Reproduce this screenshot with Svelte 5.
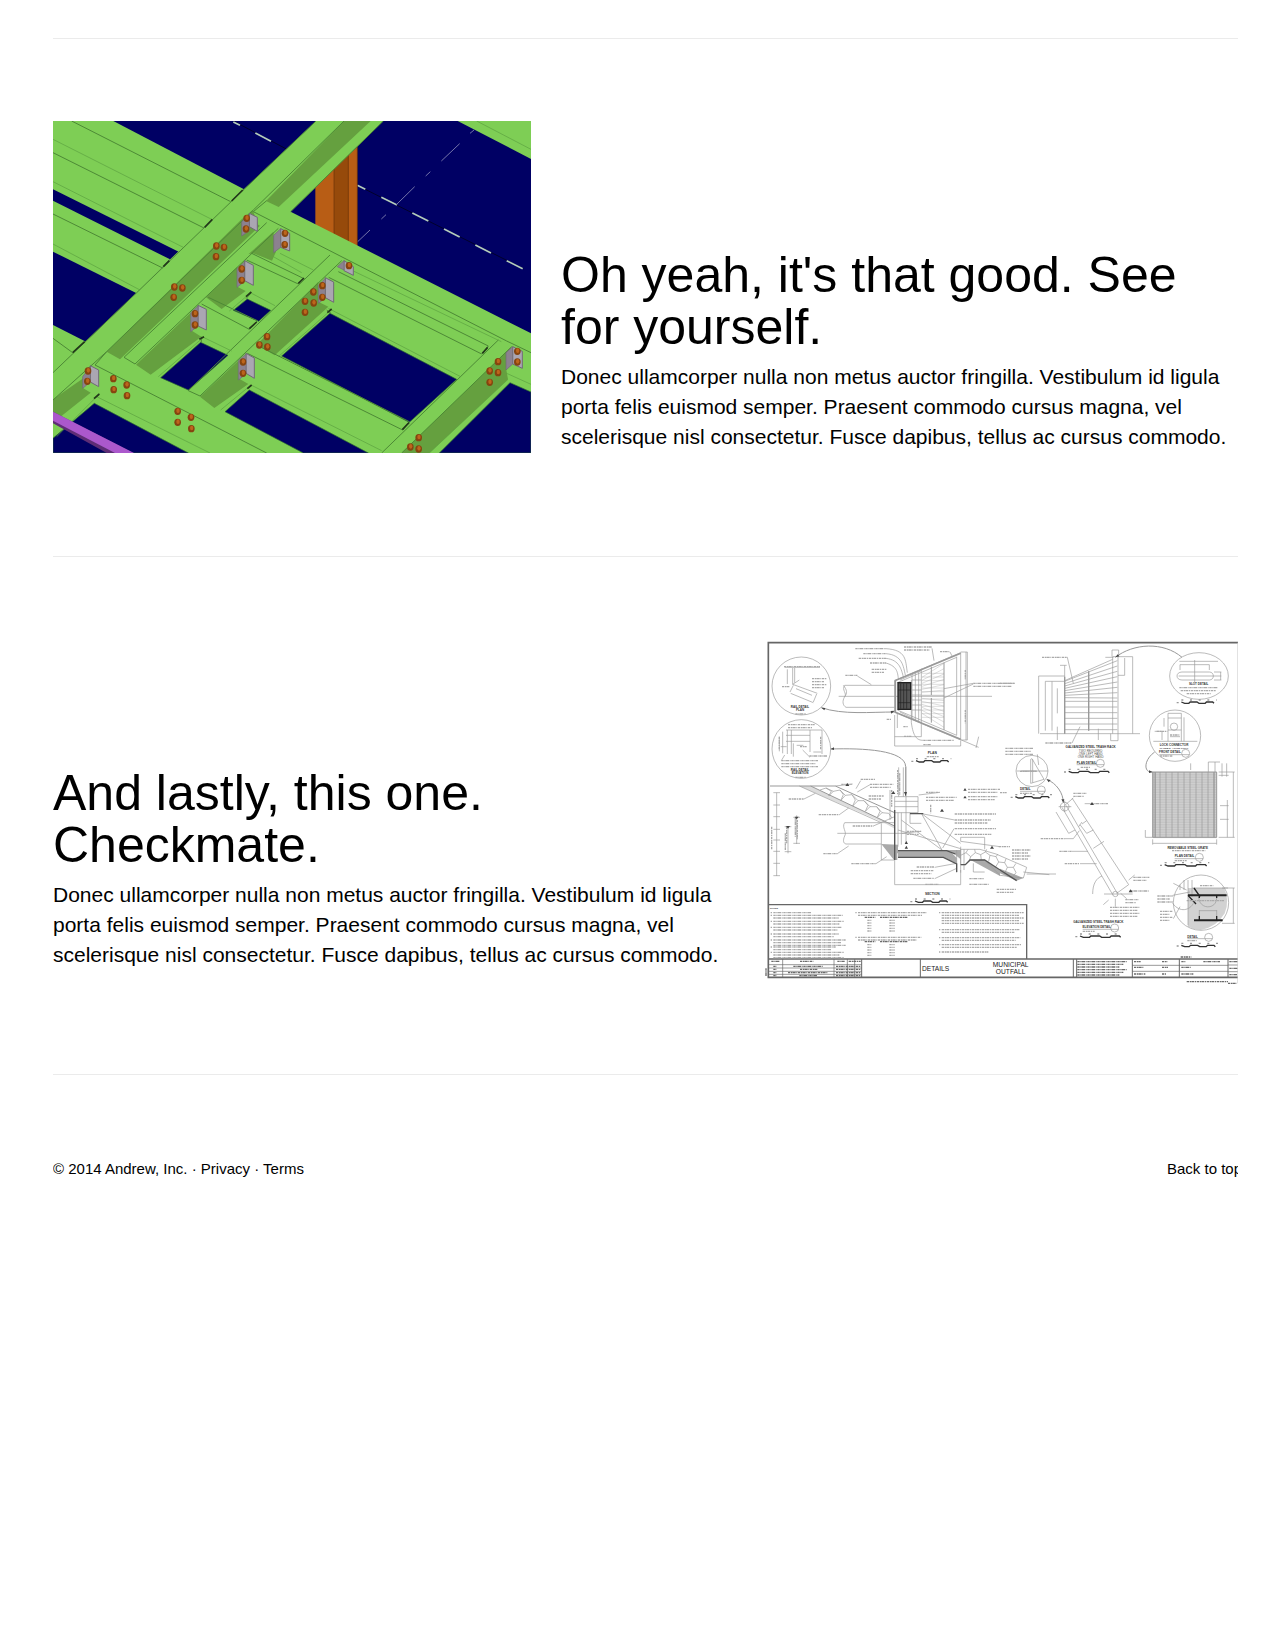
<script>
  const lead =
    'Donec ullamcorper nulla non metus auctor fringilla. Vestibulum id ligula porta felis euismod semper. Praesent commodo cursus magna, vel scelerisque nisl consectetur. Fusce dapibus, tellus ac cursus commodo.';

  const bolts = [
    [620, 325], [618, 357], [529, 408], [552, 412], [528, 440], [403, 531], [427, 534], [401, 562],
    [735, 370], [734, 404], [605, 477], [605, 511], [927, 467], [847, 527], [847, 562], [820, 546],
    [795, 574], [821, 579], [795, 607], [465, 611], [465, 645], [681, 680], [658, 705], [682, 711],
    [609, 756], [609, 790], [144, 783], [142, 814], [220, 806], [221, 839], [260, 825], [261, 857],
    [413, 904], [413, 937], [453, 922], [454, 956], [1432, 724], [1432, 756], [1374, 755],
    [1349, 783], [1374, 788], [1349, 817], [1136, 983], [1111, 1011], [1136, 1017]
  ];

  // Small annotation blocks: x, y, width, number of rows
  const notes = [
    [286, 56, 92, 1], [310, 71, 68, 1], [296, 85, 82, 1], [330, 99, 48, 1], [335, 118, 45, 2],
    [256, 136, 36, 1], [432, 51, 84, 2], [540, 65, 28, 1], [640, 160, 124, 2], [156, 146, 44, 4],
    [72, 110, 108, 1], [66, 170, 22, 1], [106, 252, 32, 1], [84, 284, 80, 2], [64, 392, 110, 3],
    [106, 442, 32, 1], [120, 350, 20, 1], [148, 378, 54, 1], [490, 331, 92, 1], [380, 268, 14, 1],
    [430, 290, 14, 1], [432, 319, 22, 1], [490, 344, 22, 1], [500, 380, 36, 1], [302, 448, 44, 1],
    [330, 463, 70, 2], [244, 463, 32, 1], [86, 507, 46, 1], [326, 498, 46, 2], [498, 487, 40, 1],
    [498, 502, 92, 2], [624, 478, 96, 2], [624, 500, 88, 2], [176, 554, 62, 1], [278, 588, 62, 1],
    [584, 552, 124, 1], [584, 570, 108, 2], [584, 596, 124, 1], [584, 613, 110, 1], [440, 604, 44, 2],
    [190, 671, 42, 1], [274, 701, 74, 1], [470, 711, 52, 1], [452, 722, 70, 2], [460, 745, 62, 1],
    [628, 746, 44, 1], [628, 763, 60, 1], [496, 763, 40, 1], [716, 650, 34, 1], [710, 778, 58, 2],
    [756, 660, 56, 4], [846, 82, 76, 1], [856, 339, 78, 1], [736, 355, 84, 3], [720, 160, 44, 1],
    [720, 488, 20, 1], [962, 412, 30, 1], [940, 490, 40, 2], [994, 521, 50, 1],
    [842, 626, 72, 1], [898, 664, 36, 1], [914, 701, 44, 1], [1120, 742, 48, 2], [1108, 783, 60, 1],
    [1096, 809, 40, 2], [1050, 832, 90, 4], [1258, 173, 116, 1], [1262, 182, 106, 1], [1280, 191, 72, 1],
    [1190, 304, 32, 1], [1230, 315, 30, 1], [1236, 662, 100, 1], [1244, 692, 36, 1], [1280, 812, 112, 1],
    [1192, 798, 46, 3], [1200, 844, 38, 4], [1320, 767, 40, 1], [1200, 378, 38, 1], [780, 490, 36, 1],
    [968, 904, 36, 1], [1282, 932, 30, 1], [780, 424, 50, 1]
  ];

  const legend = [
    [40, 848, 114, 1], [40, 856, 210, 2], [40, 874, 212, 2], [40, 892, 206, 2], [40, 912, 196, 2],
    [40, 930, 218, 3], [40, 951, 188, 2], [40, 967, 212, 3], [294, 848, 206, 2], [294, 922, 190, 2],
    [545, 848, 246, 5], [545, 899, 234, 2], [545, 923, 236, 2], [545, 944, 240, 2], [545, 966, 140, 1]
  ];

  const scales = [
    [468, 392, 106], [465, 813, 106], [926, 424, 130], [766, 500, 110], [1264, 216, 106],
    [1214, 704, 134], [960, 918, 130], [1264, 946, 110]
  ];

  const titles = [
    [120, 233, 'RAIL DETAIL', 9], [120, 243, 'PLAN', 9], [120, 422, 'RAIL DETAIL', 9],
    [120, 433, 'ELEVATION', 9], [517, 371, 'PLAN', 10], [517, 794, 'SECTION', 10],
    [992, 355, 'GALVANIZED STEEL TRASH RACK', 9], [980, 402, 'PLAN DETAIL', 9],
    [796, 481, 'DETAIL', 9], [1316, 165, 'SLOT DETAIL', 9], [1242, 349, 'LOCK CONNECTOR', 9],
    [1242, 357, 'PL REQ’D. 4 THUS TOTAL', 7], [1230, 369, 'FRONT DETAIL', 9],
    [1283, 656, 'REMOVABLE STEEL GRATE', 9], [1274, 682, 'PLAN DETAIL', 9],
    [1015, 880, 'GALVANIZED STEEL TRASH RACK', 9], [1010, 895, 'ELEVATION DETAIL', 9],
    [1298, 924, 'DETAIL', 9]
  ];

  const range = (n) => Array.from({ length: n }, (_, i) => i);
</script>

<main id="top">
  <hr />
  <section class="feature">
    <svg class="picture" viewBox="39 33 1434 996" role="img" aria-label="Steel framing model">
      <rect x="39" y="33" width="1434" height="996" fill="#000064" />
      <g fill="none" stroke="#00002c" stroke-width="3">
        <path d="M580 33L760 128M952 226L1450 476" />
      </g>
      <g fill="none" stroke="#b4ccbc" stroke-width="5">
        <path d="M580 36L600 46M646 69L693 94M952 226L976 238M1024 262L1071 285M1117 309L1165 333M1212 357L1259 381M1306 405L1353 429M1400 452L1448 476" />
      </g>
      <g fill="none" stroke="#7474aa" stroke-width="3">
        <path d="M1302 60L1290 70M1259 101L1204 153M1171 185L1157 198M1124 230L1069 284M1038 314L1024 327M990 360L952 396M320 1003L294 1029" />
      </g>
      <g fill="#b85d15">
        <path d="M826 220L952 110V415L826 352z" />
        <path fill="#964a0b" d="M882 172L925 130V403L882 382z" />
        <path fill="none" stroke="#673207" stroke-width="2" d="M882 170V380M925 130V400M952 110V410" />
      </g>
      <g fill="#7ece55">
        <path d="M39 33H220L612 238L425 430L39 238z" />
        <path d="M39 272L390 448L290 550L39 425z" />
        <path d="M39 645L135 694L80 790H39z" />
        <path d="M1253 33H1473V147z" />
        <path d="M39 788L290 548L350 486L612 238L828 33H1030L752 305L1473 670V1029H39z" />
      </g>
      <g fill="#000064" stroke="#2e6a31" stroke-width="2">
        <path d="M622 567L692 601L656 634L580 601z" />
        <path d="M482 697L564 736L445 840L362 803z" />
        <path d="M870 610L1250 808L1108 937L725 738z" />
        <path d="M628 840L985 1029H790L555 905z" />
        <path d="M1410 818L1473 846V1029H1198z" />
        <path d="M163 880L445 1029H39V985z" />
      </g>
      <g fill="#65a03f">
        <path d="M912 33H992L716 291L678 273z" />
        <path d="M605 328L638 300L655 345L660 347L240 748L200 725z" />
        <path d="M39 868L130 805V835L152 848L56 925L39 905z" />
        <path d="M700 365L708 425L696 452L640 430L625 433z" />
        <path d="M592 470V530L617 543L545 597L498 562z" />
        <path d="M452 608V660L484 680L332 794L288 764z" />
        <path d="M835 515V575L865 590L704 736L650 705z" />
        <path d="M595 752V805L625 822L523 894L480 860z" />
        <path d="M1414 712L1399 780L1404 808L1168 1029H1085z" />
      </g>
      <g fill="none" stroke="#4d8936" stroke-width="3">
        <path d="M95 33L572 275M39 128L492 354M39 312L368 474M39 685L98 728" />
        <path d="M612 238L575 272M39 788L290 548L612 238L828 33M912 33L640 300L200 725L39 870" />
        <path d="M1030 33L752 305M680 272L640 305M640 305L1400 693L1473 728M200 725L165 765L680 1029" />
        <path d="M715 355L285 762L252 742L680 338M905 452L480 858L445 842L870 435M1415 710L1085 1029M1025 1029L1375 690" />
        <path d="M635 430L790 505L775 522L620 450M505 562L652 632L628 658L485 582M895 485L1345 708L1325 732L866 502M650 705L1108 935L1088 960L622 730" />
        <path d="M634 548L618 566M484 680V697M860 600L873 610" />
      </g>
      <g fill="none" stroke="#5aa040" stroke-width="2">
        <path d="M39 88L515 328M39 215L430 412M39 402L300 540M1310 33L1473 118M940 483L1384 695M720 430L820 480" />
        <path d="M865 595L1262 800M635 826L1025 1022M170 860L510 1029M635 550L705 587M490 682L575 723M1400 790L1473 823M700 440L785 488" />
        <path d="M180 850L50 980M632 548L568 603M490 682L355 800M875 598L715 740M633 825L542 900M1404 808L1168 1029" />
      </g>
      <g fill="none" stroke="#22381a" stroke-width="5">
        <path d="M575 273L608 240M494 352L517 328M370 470L388 452M98 728L134 695M775 520L792 504M628 656L650 636M1327 730L1343 712M1087 959L1107 938" />
        <path d="M618 560L634 546M478 688L492 680M862 608L875 597M622 836L635 825M162 866L178 852" />
      </g>
      <path fill="#5e2d75" d="M39 905L280 1029H200L39 940z" />
      <path fill="#ab58cc" d="M39 905L282 1029H225L39 932z" />
      <g fill="#aaa6b2" stroke="#706a76" stroke-width="3">
        <path d="M628 310L652 322V364L628 350z" />
        <path d="M722 356L749 370V423L722 412z" />
        <path d="M614 452L640 466V526L614 512z" />
        <path d="M912 452L940 470V496L912 482z" />
        <path d="M856 503L881 516V577L856 563z" />
        <path d="M474 586L499 598V660L474 648z" />
        <path d="M618 730L643 744V805L618 790z" />
        <path d="M151 767L176 780V830L151 816z" />
        <path d="M1418 710L1447 724V775L1418 762z" />
      </g>
      <g fill="#8c8190" stroke="#706a76" stroke-width="2">
        <path d="M605 335L628 315V362L605 378z" />
        <path d="M722 356V412L701 428V376z" />
        <path d="M591 476L614 455V514L591 532z" />
        <path d="M835 526L856 505V564L835 580z" />
        <path d="M452 608L474 588V648L452 665z" />
        <path d="M595 752L618 732V792L595 810z" />
        <path d="M128 800L151 770V816L128 835z" />
        <path d="M912 452V480L892 470z" />
        <path d="M1418 710V762L1398 780V728z" />
      </g>
      {#each bolts as [x, y]}
        <ellipse cx={x} cy={y} rx="10" ry="11" fill="#86440f" />
        <ellipse cx={x + 1} cy={y - 2} rx="5" ry="7" fill="#bd651c" />
      {/each}
    </svg>
    <div class="copy">
      <h2>Oh yeah, it's that good. See for yourself.</h2>
      <p>{lead}</p>
    </div>
  </section>

  <hr />
  <section class="feature flipped">
    <div class="copy">
      <h2>And lastly, this one. Checkmate.</h2>
      <p>{lead}</p>
    </div>
    <svg class="picture" viewBox="0 27 1434 1059" role="img" aria-label="Municipal outfall details">
      <!-- sheet frame and title block -->
      <g fill="none" stroke="#666" stroke-width="5">
        <path d="M1434 38H25V1042H1434" />
        <path d="M25 824H800V987M25 987H1434" stroke-width="4" />
        <path d="M305 987V1042M481 987V1042M940 987V1042M950 987V1042M1117 987V1042M1258 987V1042M1404 987V1042" stroke-width="3" />
        <path d="M25 1004H305M25 1014H305M25 1024H305M25 1033H305M68 987V1042M222 987V1042M262 987V1042M284 987V1042" stroke-width="2" />
        <path d="M1117 1006H1404M1117 1024H1404M1404 1005H1434M1404 1025H1434" stroke-width="2" />
      </g>
      <path d="M1433 38V1060" stroke="#ccc" stroke-width="2" />
      <g fill="#222" font-size="20">
        <text x="486" y="1023">DETAILS</text>
        <text x="752" y="1012" text-anchor="middle">MUNICIPAL</text>
        <text x="752" y="1033" text-anchor="middle">OUTFALL</text>
      </g>
      <g class="small dark">
        {#each range(6) as i}
          <path d="M952 {995 + i * 8}h{150 - (i % 3) * 12}" />
        {/each}
        <path d="M34 994H60M120 994H160M232 994H254M266 994H302M100 1009H190M120 1018H172M84 1028H204M118 1037H172M228 1009H302M228 1018H302M228 1028H302M228 1037H302M40 1009h10M40 1018h10M40 1028h10M40 1037h10" />
        <path d="M1122 995h20M1206 995h16M1122 1012h28M1206 1012h18M1122 1032h34M1206 1032h12M1264 995h12M1330 995h50M1264 1012h28M1264 1032h36M1408 995h26M1408 1015h26M1408 1034h24M1262 981h32M1280 1055h124M1404 1060h26" />
        <path d="M18 1015V1040" />
      </g>

      <!-- rail details -->
      <g class="line">
        <ellipse cx="124" cy="168" rx="88" ry="87" />
        <ellipse cx="124" cy="357" rx="88" ry="88" />
        <path d="M98 114V163L118 150M104 114V158M98 163L172 190M92 190L160 218M90 186L100 166M160 216L170 192M82 118V162M108 176L156 196M74 112H180" />
        <path d="M78 300H152M78 316H150M78 334H150M82 300V372M94 300V372M150 300V366M152 300H186V372M68 305V370M58 320V364M80 350H62M100 340V380M110 346H130M184 366H160M128 360L150 382M74 375L64 392" />
        <path d="M184 233C250 255 330 246 404 246M212 357C310 354 436 360 437 410V498" stroke-width="3" />
      </g>

      <!-- outfall plan -->
      <g class="line">
        <path d="M404 166H254C244 180 262 190 254 200C246 214 248 226 258 232H404M250 166C262 180 262 190 254 200M236 199H696" />
        <path d="M378 56C440 60 436 90 442 128M378 71C428 75 430 110 436 135M378 85C420 90 424 120 430 140M378 99C415 110 412 130 416 150M516 55L522 92M570 66L576 78M292 138L334 164M640 160L552 176M640 162L552 204M454 150V278C460 320 470 331 490 331" />
        <path d="M404 152L602 68V330L404 246zM412 158L590 82M412 240L590 316M484 116V280M456 130V270M420 150L484 122M420 246L484 278M466 130V270M476 125V275M456 150H484M456 165H484M456 180H484M456 195H484M456 210H484M456 225H484M456 240H484M590 80V316M602 66H622V330H602M618 66V330M404 255V348H602V332M404 320H484V282M412 250V294M604 330L656 352M648 354L656 320" />
        {#each range(13) as i}
          <path d="M486 {142 + i * 9}L552 {100 + i * 16}" stroke-width="1" />
          <path d="M486 {130 + i * 11}H552" stroke-width="1" />
        {/each}
        <path d="M552 98V300M514 110V195M514 204V278" stroke-width="3" />
        <path d="M404 152L602 70M404 246L602 328M406 150V248" stroke-width="5" />
      </g>
      <rect x="414" y="158" width="38" height="80" fill="#555" stroke="#222" stroke-width="4" />
      <path d="M422 160V236M431 160V236M440 160V236M414 180H452M414 218H452" stroke="#222" stroke-width="2" />

      <!-- section -->
      <path d="M118 468L152 468L404 588V596L372 578z" fill="#ddd" />
      <path d="M364 642L402 690H412V670H580L602 688V660H414V644z" fill="#aaa" />
      <path d="M414 662H570L590 684V700L550 682H414zM632 690L674 690L720 722V738zM720 716L790 744L770 752L720 730z" fill="#aaa" />
      <g class="line">
        <path d="M30 468H226L404 548M152 468L404 588" stroke-width="3" />
        <path d="M118 468L364 578" />
        <path d="M180 480l18-6 16 10-8 14M206 498l14-14 20-4 10 14-8 18M242 512l14-16 20-2 10 16-8 18M278 528l16-16 18 0 12 14-8 18M316 544l14-14 20 0 10 14-8 18M352 562l14-14 20 2 10 14M198 474l22 10M240 480l16 16M276 494l18 18M312 512l18 18M350 530l16 18" />
        <path d="M50 488V738M40 488H60M40 525H60M40 560H60M40 598H60M40 630H60M40 664H60M40 700H60M40 737H60M84 588V670M110 556V642M74 590H94M74 665H94M100 562H120M100 640H120" />
        <path d="M404 578H254C244 592 262 606 254 618C248 632 250 640 258 642H364M232 610H440M404 500H474V548H404zM404 514H474M404 530H474M404 548V690M414 548V650M424 548V644M438 410V640M416 412V500M430 412V500M484 550L546 660M484 550L602 640M424 570L546 660M414 600L602 656M450 548V580H484M390 480V570M364 580V690H402M404 690V764H602V720" />
        <path d="M602 658H660L708 672L800 712L790 744L720 736L674 690H632L616 704H602zM602 634V622H674V658M602 634L720 650M590 660V728M602 650V728M612 720V658M640 700V726H674M800 732H888M790 726L868 734" />
        <path d="M602 676l16-8 14 12-4 12M618 668l6-10M632 680l14-12 16 6 2 16M646 668l-2-10M662 674l14-8 14 10-4 18M676 666l4-8M690 676l18 4 8 16-10 16M708 680l6-8M716 696l18 2 8 14-8 18M734 698l4-12M742 712l18 0 8 16-8 10M760 712l8-12" />
        <path d="M238 554L266 534M340 588L404 560M348 701L380 680M524 712L590 700M524 746L588 716M484 604L426 610M540 487L476 495M582 596L548 654M584 570L490 552M278 462L226 468M302 452L288 476M330 464L292 486M232 671L266 648M132 507L166 490" />
      </g>
      <path d="M404 540V690M414 662H560L586 672M414 682H550L590 702V726M602 704H616L630 690H674L720 720L770 752M450 551H490" fill="none" stroke="#555" stroke-width="4" />

      <!-- trash rack plan -->
      <g class="line">
        <path d="M914 106V311M986 124V302M1058 80V311M1074 80V311M914 152L1058 88M840 311H1140M836 138H914M836 138V311M876 154V302M892 175V250M856 154H914M856 154V302M1058 80H1118V311M1094 84V136H1074M900 106H920M1015 296V330M892 290V330M1036 82H1060M1056 60H1076V80M1056 60V80M922 82L940 160M936 339L960 290M1052 311V332H1074V311" />
        {#each range(8) as i}
          <path d="M914 {154 + i * 7}L1072 {92 + i * 16}" />
        {/each}
        {#each range(6) as i}
          <path d="M914 {214 + i * 17}H1072" />
        {/each}
        <path d="M986 124V302M914 140V311" stroke-width="4" />
        <path d="M1066 82C1120 40 1210 34 1266 82" stroke-width="3" />
        <ellipse cx="1317" cy="138" rx="88" ry="70" />
        <path d="M1258 94H1374M1260 104H1348M1260 104V120M1348 104V120M1266 126H1348C1364 126 1364 150 1348 150H1266C1246 150 1246 126 1266 126zM1304 90V156M1256 138H1384M1382 126V150M1362 126H1384M1362 150H1384" />
        <ellipse cx="1245" cy="317" rx="77" ry="77" />
        <path d="M1224 250H1264M1224 250V300H1264V250M1224 264H1264M1272 262V334M1212 264V290M1180 334H1312M1224 300V334M1264 300V334M1184 304H1206V330M1230 320H1260" />
        <circle cx="1242" cy="290" r="11" />
        <path d="M1184 366C1150 390 1150 430 1178 426" stroke-width="3" />
      </g>

      <!-- grate -->
      <rect x="1178" y="426" width="192" height="196" fill="#d6d6d6" />
      <g class="line">
        {#each range(40) as i}
          <path d="M1178 {428 + i * 5}H1370" stroke-width="1" />
        {/each}
        {#each range(11) as i}
          <path d="M{1182 + i * 18} 426V622" />
        {/each}
        <path d="M1178 426H1370V622H1178zM1186 426V622M1362 426V622" stroke-width="3" />
        <path d="M1178 640H1370M1178 628V644M1370 628V644M1376 426H1424M1376 622H1424M1420 426V622M1376 436H1406M1400 400V440M1386 400V440M1345 396V426M1365 396V426M1345 396H1380M1292 400V420M1156 600V622H1178M1380 527H1406M1380 568H1406M1402 510V622" />
      </g>

      <!-- rack elevation -->
      <g class="line">
        <ellipse cx="816" cy="423" rx="48" ry="47" />
        <path d="M812 388V460L852 448L816 386zM818 388V458M770 423H864M832 373L836 405M784 423H830" />
        <path d="M860 448C890 460 910 490 910 518" stroke-width="3" />
        <circle cx="914" cy="530" r="13" /><circle cx="1066" cy="792" r="8" />
        <path d="M896 530H934M914 512V546M906 532L1058 794M918 526L1072 790M936 504L1106 764L1070 790M914 526L940 504M888 546L926 610L945 600M966 582L980 572M1000 655L1032 634M914 626H940L958 602M934 664H984M960 701H1010M1032 792H1118M998 792C998 760 1010 744 1026 738M1106 750L1124 735M1066 806V830M1082 790L1100 806M974 521H994M960 584L980 610L1000 600M956 590L966 576M1046 810L1030 824" />
      </g>

      <!-- connection detail -->
      <path d="M1284 774H1392Q1410 810 1394 850Q1370 892 1322 900Q1300 898 1284 890z" fill="#d2d2d2" />
      <g class="line">
        <ellipse cx="1323" cy="818" rx="83" ry="83" />
        <path d="M1284 750V886M1296 750V800M1296 774H1404M1386 774H1424M1386 880H1424M1420 774V880M1318 840V868M1370 840V868M1318 842H1370M1316 800C1316 840 1370 840 1370 804M1240 760L1280 780M1238 796L1290 786M1238 820C1260 850 1290 840 1300 820M1240 866L1260 830M1260 764V780M1272 750V780" />
      </g>
      <g fill="none" stroke="#222" stroke-width="6">
        <path d="M1284 796H1400M1302 871H1388" />
        <path d="M1284 796L1308 822M1302 774L1320 800M1318 858V870M1370 858V870M1318 796V804M1370 796V804" stroke-width="4" />
      </g>

      <g class="line">
        <circle cx="1021" cy="400" r="12" /><circle cx="844" cy="480" r="12" /><circle cx="1277" cy="370" r="12" />
        <circle cx="1318" cy="682" r="12" /><circle cx="1064" cy="894" r="12" /><circle cx="1346" cy="922" r="12" />
        <path d="M950 404H1033M780 484H856M1198 374H1289M1244 686H1330M968 898H1076M1282 926H1358" />
      </g>
      {#each scales as [x, y, w]}
        <path class="scale" d="M{x} {y}l10 4h{w / 4 - 14}l4-4h{w / 4 - 6}l6 4h{w / 4 - 8}l4-4h{w / 4 - 8}l4 4" />
        <path class="ticks" d="M{x} {y - 6}h{w}M{x - 14} {y + 2}h6" />
      {/each}
      {#each notes as [x, y, w, rows]}
        {#each range(rows) as i}
          <path class="small" d="M{x} {y + i * 9}h{w - (i % 2) * 8}" />
        {/each}
      {/each}
      {#each legend as [x, y, w, rows]}
        {#each range(rows) as i}
          <path class="small" d="M{x} {y + i * 8}h{w - (i % 2) * 14}" />
        {/each}
        <path class="small" d="M{x - 8} {y}h4" />
      {/each}
      {#each [862, 935] as top}
        <path class="small dark" d="M314 {top}h32M360 {top}h82" />
        {#each range(5) as i}
          <path class="small" d="M322 {top + 9 + i * 8}h12M388 {top + 9 + i * 8}h16" />
        {/each}
      {/each}
      <g class="small">
        <path d="M35 590V660M80 590V640M76 610V660M106 562V620M112 570V630M413 420V494M419 430V494M58 320V360M182 320V360M395 480V530M512 524V550M616 120V150M616 240V280" />
      </g>
      <g fill="#333" font-weight="bold" text-anchor="middle">
        {#each titles as [x, y, label, size]}
          <text {x} {y} font-size={size}>{label}</text>
        {/each}
        <text x="42" y="837" font-size="7">NOTES</text>
      </g>
      <g fill="#555" font-size="9" text-anchor="middle">
        <text x="992" y="365">TWO REQUIRED</text>
        <text x="992" y="375">ONE LEFT HAND</text>
        <text x="992" y="385">ONE RIGHT HAND</text>
      </g>
      <g fill="#444">
        <path d="M404 242l-12 1 2 8zM437 498l-5-12h9zM1066 82l12-3-5-6zM910 518l-6-10h9zM860 448l12 2-6 7zM1178 426l-11-5v8zM184 233l12 1-3 7zM212 357l10-5v8zM256 468l6-9 6 9zM394 492l6-9 6 9zM610 482l5-8 5 8zM610 505l5-8 5 8zM540 545l6-9 6 9zM434 642l5-9 5 9zM434 656l5-9 5 9zM690 656l6-9 6 9zM990 525l6-9 6 9zM1106 787l6-9 6 9zM104 560h12l-6 8zM78 588h12l-6 8z" />
      </g>
    </svg>
  </section>

  <hr />
  <footer>
    <p>© 2014 Andrew, Inc. · <a href="#privacy">Privacy</a> · <a href="#terms">Terms</a></p>
    <a class="back" href="#top">Back to top</a>
  </footer>
</main>

<style>
  :global(body) {
    margin: 0;
    background: #fff;
  }
  main {
    margin: 0 37px 0 53px;
    padding-top: 38px;
    overflow: hidden;
    color: #000;
    font-family: 'Liberation Sans', Arial, sans-serif;
  }
  hr {
    height: 1px;
    margin: 0;
    border: 0;
    background: #ebebeb;
  }
  .feature {
    display: grid;
    grid-template-columns: 478fr 677fr;
    gap: 30px;
    align-items: start;
    min-height: 353px;
    padding: 82px 0;
  }
  .flipped {
    grid-template-columns: 677fr 478fr;
  }
  .picture {
    display: block;
    width: 100%;
    height: auto;
  }
  .copy {
    padding-top: 128px;
  }
  h2 {
    margin: 0 0 9px;
    font-size: 50px;
    font-weight: 400;
    line-height: 52px;
  }
  p {
    margin: 0;
    font-size: 21px;
    font-weight: 400;
    line-height: 30px;
  }
  footer {
    display: flex;
    justify-content: space-between;
    padding: 83px 0 20px;
    font-size: 15px;
    line-height: 22px;
  }
  footer p {
    font-size: 15px;
    line-height: 22px;
  }
  a {
    color: inherit;
    text-decoration: none;
  }
  .back {
    margin-right: -4px;
    white-space: nowrap;
  }
  .line {
    fill: none;
    stroke: #999;
    stroke-width: 2;
  }
  .small {
    fill: none;
    stroke: #aaa;
    stroke-width: 4;
    stroke-dasharray: 7 2 4 1 9 2 3 2;
  }
  .dark {
    stroke: #6c6c6c;
  }
  .ticks {
    fill: none;
    stroke: #999;
    stroke-width: 4;
    stroke-dasharray: 6 20;
  }
  .scale {
    fill: none;
    stroke: #333;
    stroke-width: 4;
  }
</style>
